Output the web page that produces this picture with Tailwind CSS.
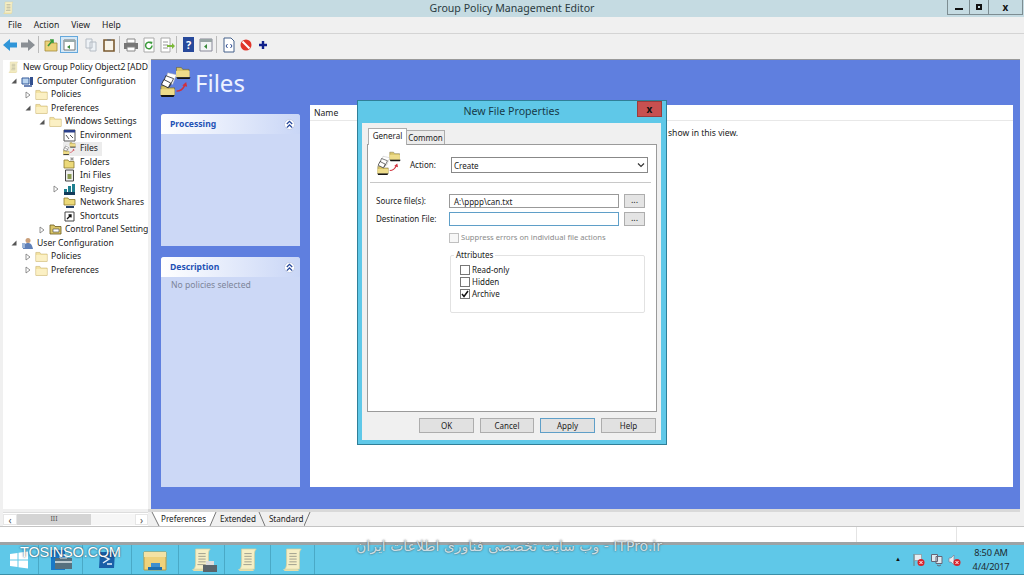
<!doctype html>
<html>
<head>
    <meta charset="UTF-8">
    <script src="https://cdn.jsdelivr.net/npm/@tailwindcss/browser@4"></script>
</head>
<body class="bg-[#f0f0f0]">
<svg class="hidden">
    <defs>
        <symbol id="folder" viewBox="0 0 16 16">
            <path d="M1 3h5l1 2h8v9H1z" fill="#f3e2a0" stroke="#cdb878" stroke-width="0.8"/>
            <path d="M1.500 6h13v7.500h-13z" fill="#fbf0c4"/>
        </symbol>
        <symbol id="files" viewBox="0 0 32 32">
            <path d="M17 1.500h5l1.500 2H30v8H17z" fill="#d8c468" stroke="#5a5020" stroke-width="0.5"/>
            <path d="M16.500 5h14v6.500h-14z" fill="#eedc8a"/>
            <path d="M17 11.500h14.500l-1 2H18z" fill="#161616"/>
            <path d="M1 20.500h5l1.500 2H15v7.500H1z" fill="#d8c468" stroke="#5a5020" stroke-width="0.5"/>
            <path d="M0.500 24h14.500v6H0.500z" fill="#eedc8a"/>
            <path d="M0.500 30h14.500l-1 2H1.500z" fill="#161616"/>
            <path d="M8 7l9 2-4 10-8-3z" fill="#fff" stroke="#aaa" stroke-width="0.5"/>
            <path d="M6 10l8 3-4 8-7-3z" fill="#fff" stroke="#222" stroke-width="0.8"/>
            <path d="M4 14l7 3.500-2.500 5-7-3.500z" fill="#fff" stroke="#111" stroke-width="0.8"/>
            <path d="M17 26q6 0 8.500-6" fill="none" stroke="#d0303c" stroke-width="1.400"/>
            <path d="M23 20l4-3.500 1 5z" fill="#d0303c"/>
        </symbol>
        <symbol id="scroll" viewBox="0 0 24 28">
            <path d="M5 2h16c-2 2-2 4-2 8v14H3c2-2 2-5 2-8z" fill="#f6efc6" stroke="#d9cf9a" stroke-width="0.8"/>
            <path d="M8 7h8M8 10h8M8 13h8M8 16h8M7 19h9" stroke="#9a9a8a" stroke-width="1"/>
            <path d="M1 24h16c1 2 2 2 3 2H3z" fill="#e9dda6"/>
        </symbol>
        <symbol id="tri-open" viewBox="0 0 8 8"><path d="M6.500 1.500v5h-5z" fill="#555"/></symbol>
        <symbol id="tri-closed" viewBox="0 0 8 8"><path d="M2 1l4 3-4 3z" fill="#fff" stroke="#777" stroke-width="0.8"/></symbol>
        <symbol id="collapse" viewBox="0 0 10 10"><path d="M2 4.500l3-3 3 3M2 8.500l3-3 3 3" fill="none" stroke="#26489a" stroke-width="1.400"/></symbol>
    </defs>
</svg>

<div class="relative w-[1024px] h-[575px] overflow-hidden flex flex-col text-[#222] text-[8.6px] font-['Noto_Sans','Open_Sans',sans-serif]">
    <!-- title bar -->
    <div class="relative h-[17px] bg-[#c5dbe2] flex items-center justify-center text-[10.6px] text-[#2a3a40]">
        <svg class="absolute left-[2px] top-[1px] w-[13px] h-[14px]"><use href="#scroll"/></svg>
        <span>Group Policy Management Editor</span>
        <div class="absolute right-[1px] top-0 flex h-[15px] border-b border-[#7d8d92]">
            <div class="w-[22px] border-l border-[#7d8d92] flex items-center justify-center"><div class="w-[8px] h-[2px] mt-[3px] bg-[#111]"></div></div>
            <div class="w-[19px] border-l border-[#7d8d92] flex items-center justify-center"><div class="w-[6px] h-[6px] border-2 border-[#111]"></div></div>
            <div class="w-[35px] border-x border-[#7d8d92] flex items-center justify-center text-[10px] font-bold text-[#111]">x</div>
        </div>
    </div>
    <!-- menu -->
    <div class="h-[16px] flex items-center pl-[8px] gap-[12px]">
        <span>File</span><span>Action</span><span>View</span><span>Help</span>
    </div>
    <div class="h-px bg-[#d4d4d4]"></div>
    <!-- toolbar -->
    <div class="h-[25px] flex items-center pl-[1px] pb-[4px]">
        <svg class="w-[18px] h-[18px]" viewBox="0 0 18 18"><path d="M2 9l7-6v3.500h7v5H9V15z" fill="#2f95d8"/></svg>
        <svg class="w-[18px] h-[18px]" viewBox="0 0 18 18"><path d="M16 9L9 3v3.500H2v5h7V15z" fill="#8a8f94"/></svg>
        <div class="w-px h-[17px] bg-[#bbb] ml-[1px] mr-[3px]"></div>
        <svg class="w-[18px] h-[18px]" viewBox="0 0 18 18"><path d="M3 5h5l1 2h6v8H3z" fill="#ecd27a" stroke="#a38c3e" stroke-width="0.8"/><path d="M6 10l5-6m-3 0h3v3" fill="none" stroke="#3a9a3a" stroke-width="1.600"/></svg>
        <div class="w-[18px] h-[17px] border border-[#64a8dc] bg-[#d5e8f6] flex items-center justify-center">
            <svg class="w-[13px] h-[12px]" viewBox="0 0 13 12"><path d="M1 1h11v10H1z" fill="#fff" stroke="#777"/><path d="M1 1h11v2H1z" fill="#9aa"/><path d="M7 6v4l-3-2z" fill="#3a8a3a"/></svg>
        </div>
        <svg class="w-[18px] h-[18px] ml-[4px]" viewBox="0 0 18 18"><path d="M4 3h6v9H4zM8 6h6v9H8z" fill="#eef2f6" stroke="#b5bcc4"/></svg>
        <svg class="w-[18px] h-[18px]" viewBox="0 0 18 18"><path d="M4 4h10v11H4z" fill="#f8f4ea" stroke="#7a5a30" stroke-width="1.600"/><path d="M7 3h4v2H7z" fill="#777"/></svg>
        <div class="w-px h-[17px] bg-[#bbb] mx-[1px]"></div>
        <svg class="w-[18px] h-[18px] ml-[1px]" viewBox="0 0 18 18"><path d="M5 3h8v4H5z" fill="#fff" stroke="#888"/><path d="M2 7h14v6H2z" fill="#777"/><path d="M5 11h8v4H5z" fill="#fff" stroke="#888"/></svg>
        <svg class="w-[18px] h-[18px]" viewBox="0 0 18 18"><path d="M4 2h10v14H4z" fill="#fff" stroke="#aaa"/><path d="M12 9.500a3.200 3.200 0 1 1-1-2.300" fill="none" stroke="#3a9a3a" stroke-width="1.500"/><path d="M9.500 5.500l3 .2-.6 2.800z" fill="#3a9a3a"/></svg>
        <svg class="w-[18px] h-[18px]" viewBox="0 0 18 18"><path d="M3 2h9v14H3z" fill="#fff" stroke="#aaa"/><path d="M5 6h5M5 9h5M5 12h5" stroke="#999"/><path d="M9 9h5V7l3 3-3 3v-2H9z" fill="#7cb83a"/></svg>
        <div class="w-px h-[17px] bg-[#bbb] mr-[1px]"></div>
        <div class="w-[11px] h-[15px] ml-[5px] mr-[3px] bg-[#27499b] text-white text-[11px] leading-[15px] text-center font-bold">?</div>
        <svg class="w-[18px] h-[18px]" viewBox="0 0 18 18"><path d="M3 3h12v12H3z" fill="#f2f4f4" stroke="#889"/><path d="M3 3h12v3H3z" fill="#99a5a5"/><path d="M10 8v5l-3-2.500z" fill="#3a8a3a"/></svg>
        <div class="w-px h-[17px] bg-[#bbb] mx-[1px]"></div>
        <svg class="w-[18px] h-[18px] ml-[2px]" viewBox="0 0 18 18"><path d="M4 2h7l3 3v11H4z" fill="#fff" stroke="#44608a"/><path d="M7.500 8L6 10l1.500 2M10.500 8L12 10l-1.500 2" fill="none" stroke="#2b4a90"/></svg>
        <svg class="w-[18px] h-[18px] -ml-[1px]" viewBox="0 0 18 18"><circle cx="9" cy="9" r="5.500" fill="#e0352a"/><path d="M5.500 5.500l7 7" stroke="#fff" stroke-width="2"/></svg>
        <svg class="w-[18px] h-[18px] -ml-[1px]" viewBox="0 0 18 18"><path d="M9 5v8M5 9h8" stroke="#10208a" stroke-width="2.400"/></svg>
    </div>
    <!-- main -->
    <div class="h-px bg-[#9a9a9a] ml-[151px] mr-[4px]"></div>
    <div class="flex h-[449px] pl-[3px] pr-[4px]">
        <div class="w-[145px] bg-white flex flex-col pt-[1px]">
            <div class="flex items-center h-[13.5px] pl-[4px]"><svg class="w-[13px] h-[13px] shrink-0"><use href="#scroll"/></svg><span class="ml-[3px] whitespace-nowrap tracking-[-0.1px]">New Group Policy Object2 [ADD</span></div>
            <div class="flex items-center h-[13.5px] pl-[10px]"><svg class="w-[8px] h-[8px] -ml-[3px] mr-[3px]"><use href="#tri-open"/></svg><svg class="w-[13px] h-[13px]" viewBox="0 0 13 13"><path d="M1 3h7v6H1z" fill="#b9d3ee" stroke="#345a9a"/><path d="M3 10h8v2H3z" fill="#6d85b5"/><path d="M9 2h3v8H9z" fill="#33508f"/></svg><span class="ml-[3px]">Computer Configuration</span></div>
            <div class="flex items-center h-[13.5px] pl-[24px]"><svg class="w-[8px] h-[8px] -ml-[3px] mr-[3px]"><use href="#tri-closed"/></svg><svg class="w-[13px] h-[13px]"><use href="#folder"/></svg><span class="ml-[3px]">Policies</span></div>
            <div class="flex items-center h-[13.5px] pl-[24px]"><svg class="w-[8px] h-[8px] -ml-[3px] mr-[3px]"><use href="#tri-open"/></svg><svg class="w-[13px] h-[13px]"><use href="#folder"/></svg><span class="ml-[3px]">Preferences</span></div>
            <div class="flex items-center h-[13.5px] pl-[38px]"><svg class="w-[8px] h-[8px] -ml-[3px] mr-[3px]"><use href="#tri-open"/></svg><svg class="w-[13px] h-[13px]"><use href="#folder"/></svg><span class="ml-[3px]">Windows Settings</span></div>
            <div class="flex items-center h-[13.5px] pl-[60px]"><svg class="w-[13px] h-[13px]" viewBox="0 0 13 13"><path d="M1 1h11v11H1z" fill="#fff" stroke="#555"/><path d="M1 1h11v2.500H1z" fill="#2a3f8a"/><path d="M3 6l3 4M7 6l3 3" stroke="#555"/></svg><span class="ml-[4px]">Environment</span></div>
            <div class="flex items-center h-[13.5px] pl-[60px]"><div class="flex items-center bg-[#ececec] h-[13.5px] pr-[4px]"><svg class="w-[13px] h-[13px]"><use href="#files"/></svg><span class="ml-[4px]">Files</span></div></div>
            <div class="flex items-center h-[13.5px] pl-[60px]"><svg class="w-[13px] h-[13px]" viewBox="0 0 13 13"><path d="M1 4h4l1 1.500h5V12H1z" fill="#ecd979" stroke="#8a7a30" stroke-width="0.8"/><path d="M9 1v4M7 3h4M7.500 1.500l3 3M10.500 1.500l-3 3" stroke="#888" stroke-width="0.7"/></svg><span class="ml-[4px]">Folders</span></div>
            <div class="flex items-center h-[13.5px] pl-[60px]"><svg class="w-[13px] h-[13px]" viewBox="0 0 13 13"><path d="M2.500 1h8v11h-8z" fill="#eee" stroke="#444"/><path d="M4.500 5h4v5h-4z" fill="#8a9a50"/></svg><span class="ml-[4px]">Ini Files</span></div>
            <div class="flex items-center h-[13.5px] pl-[52px]"><svg class="w-[8px] h-[8px] -ml-[3px] mr-[3px]"><use href="#tri-closed"/></svg><svg class="w-[13px] h-[13px]" viewBox="0 0 13 13"><path d="M1 6h3v6H1zM5 3h3v9H5zM9 1h3v11H9z" fill="#1f7f8f"/><path d="M1 9h11v3H1z" fill="#123a5a"/></svg><span class="ml-[4px]">Registry</span></div>
            <div class="flex items-center h-[13.5px] pl-[60px]"><svg class="w-[13px] h-[13px]" viewBox="0 0 13 13"><path d="M1 2h4l1 1.500h6V9H1z" fill="#ecd979" stroke="#8a7a30" stroke-width="0.8"/><path d="M3 10h8v2H3z" fill="#24406a"/></svg><span class="ml-[4px]">Network Shares</span></div>
            <div class="flex items-center h-[13.5px] pl-[60px]"><svg class="w-[13px] h-[13px]" viewBox="0 0 13 13"><path d="M2 2h9v9H2z" fill="#fff" stroke="#444"/><path d="M4 9l4-4M5.500 5H8v2.500" fill="none" stroke="#111" stroke-width="1.300"/></svg><span class="ml-[4px]">Shortcuts</span></div>
            <div class="flex items-center h-[13.5px] pl-[38px]"><svg class="w-[8px] h-[8px] -ml-[3px] mr-[3px] shrink-0"><use href="#tri-closed"/></svg><svg class="w-[13px] h-[13px] shrink-0" viewBox="0 0 13 13"><path d="M1 2h4l1 1.500h6V11H1z" fill="#d9c468" stroke="#6a5a20" stroke-width="0.8"/><path d="M4 6h6v3H4z" fill="#fff" stroke="#444" stroke-width="0.6"/></svg><span class="ml-[3px] whitespace-nowrap tracking-[-0.1px]">Control Panel Setting</span></div>
            <div class="flex items-center h-[13.5px] pl-[10px]"><svg class="w-[8px] h-[8px] -ml-[3px] mr-[3px]"><use href="#tri-open"/></svg><svg class="w-[13px] h-[13px]" viewBox="0 0 13 13"><circle cx="7" cy="3.500" r="2.500" fill="#c99f7a"/><path d="M2 12c0-4 2-6 5-6s4 2 5 6z" fill="#5f80b8"/><path d="M1 6h3v5H1z" fill="#9cb5d8"/></svg><span class="ml-[3px]">User Configuration</span></div>
            <div class="flex items-center h-[13.5px] pl-[24px]"><svg class="w-[8px] h-[8px] -ml-[3px] mr-[3px]"><use href="#tri-closed"/></svg><svg class="w-[13px] h-[13px]"><use href="#folder"/></svg><span class="ml-[3px]">Policies</span></div>
            <div class="flex items-center h-[13.5px] pl-[24px]"><svg class="w-[8px] h-[8px] -ml-[3px] mr-[3px]"><use href="#tri-closed"/></svg><svg class="w-[13px] h-[13px]"><use href="#folder"/></svg><span class="ml-[3px]">Preferences</span></div>
        </div>
        <div class="w-[3px] bg-[#f0f0f0]"></div>
        <div class="flex-1 bg-[#5f7fdf] flex pl-[10px] pr-[7px] pb-[22px]">
            <div class="w-[139px] shrink-0 flex flex-col">
                <div class="h-[54px] flex items-start pt-[6px] -ml-[1px]">
                    <svg class="w-[31px] h-[31px]"><use href="#files"/></svg>
                    <span class="ml-[4px] mt-[1px] text-[24px] leading-[32px] text-[#edf2ff]">Files</span>
                </div>
                <div class="h-[132px] bg-[#ccd8f6] rounded-t-[3px]">
                    <div class="h-[20px] bg-gradient-to-r from-white to-[#c9d6f6] flex items-center justify-between pl-[9px] pr-[5px] pt-[1px] rounded-t-[3px]">
                        <span class="font-bold text-[#1f52b5]">Processing</span>
                        <div class="w-[11px] h-[11px] rounded-full bg-white border border-[#c3cde6] flex items-center justify-center"><svg class="w-[9px] h-[9px]"><use href="#collapse"/></svg></div>
                    </div>
                </div>
                <div class="flex-1 mt-[11px] bg-[#ccd8f6] rounded-t-[3px]">
                    <div class="h-[20px] bg-gradient-to-r from-white to-[#c9d6f6] flex items-center justify-between pl-[9px] pr-[5px] rounded-t-[3px]">
                        <span class="font-bold text-[#1f52b5]">Description</span>
                        <div class="w-[11px] h-[11px] rounded-full bg-white border border-[#c3cde6] flex items-center justify-center"><svg class="w-[9px] h-[9px]"><use href="#collapse"/></svg></div>
                    </div>
                    <div class="pl-[10px] pt-[2px] text-[#7c8599]">No policies selected</div>
                </div>
            </div>
            <div class="flex-1 ml-[10px] mt-[45px] bg-white">
                <div class="h-[16px] border-b border-[#e8e8e8] pl-[4px] leading-[17px]">Name</div>
                <div class="pl-[358px] pt-[5px] leading-[14px]">show in this view.</div>
            </div>
        </div>
    </div>
    <!-- sheet tabs -->
    <div class="h-[3px] bg-[#d9d9d9] ml-[148px] mr-[4px]"></div>
    <div class="h-[14px] flex pl-[3px] pr-[4px]">
        <div class="w-[145px] flex items-center bg-white border-t border-[#ddd] text-[#555]">
            <div class="w-[14px] h-[11px] text-center leading-[10px] text-[10px] border border-[#e6e6e6]">‹</div>
            <div class="w-[74px] h-[11px] bg-[#d4d4d4] text-center leading-[10px] text-[7px]">III</div>
            <div class="flex-1 h-[11px] bg-[#f6f6f6]"></div>
            <div class="w-[13px] h-[11px] text-center leading-[10px] text-[10px] border border-[#e6e6e6]">›</div>
        </div>
        <div class="w-[3px]"></div>
        <div class="flex-1 flex items-stretch text-[8.1px]">
            <svg class="w-[10px] h-[14px]" viewBox="0 0 10 14"><path d="M1 0l7 14h2V0z" fill="#fff"/><path d="M1 0l7 14" stroke="#777" fill="none"/></svg>
            <span class="bg-white leading-[14px]">Preferences</span>
            <svg class="w-[11px] h-[14px]" viewBox="0 0 11 14"><path d="M0 0v14h4l6-14z" fill="#fff"/><path d="M4 14l6-14" stroke="#777" fill="none"/></svg>
            <span class="ml-[3px] leading-[14px]">Extended</span>
            <svg class="w-[9px] h-[14px] ml-[2px]" viewBox="0 0 9 14"><path d="M1 0l6 14" stroke="#777" fill="none"/></svg>
            <span class="ml-[2px] leading-[14px]">Standard</span>
            <svg class="w-[7px] h-[14px] ml-[1px]" viewBox="0 0 7 14"><path d="M0 14L6 0" stroke="#777" fill="none"/></svg>
        </div>
    </div>
    <!-- status bar -->
    <div class="h-px bg-[#c4c4c4]"></div>
    <div class="h-[15px] flex bg-white pl-[3px] pr-[4px]">
        <div class="flex-1"></div>
        <div class="w-[100px] border-l border-[#e4e4e4]"></div>
        <div class="w-[64px] border-l border-[#e4e4e4]"></div>
    </div>
    <div class="h-[3px] bg-[#9da3a5]"></div>
    <!-- taskbar -->
    <div class="h-[30px] bg-[#5fc8e8] border-b border-[#3b8fa8] flex items-stretch text-[#1d2b30]">
        <div class="w-[38px] flex items-center justify-center">
            <svg class="w-[18px] h-[18px]" viewBox="0 0 18 18"><path d="M0 3l7.500-1v6.500H0zM8.500 1.800L18 .5v8H8.500zM0 9.500h7.500V16L0 15zM8.500 9.500H18v8l-9.500-1.300z" fill="#fff"/></svg>
        </div>
        <div class="w-[44px] border-l border-[#4aa9c6] flex items-center justify-center">
            <svg class="w-[24px] h-[24px]" viewBox="0 0 24 24"><path d="M2 2h14v20H2z" fill="#1878c8"/><path d="M6 10h17v11H6z" fill="#56707e"/><path d="M6 14h17" stroke="#dfe8ec" stroke-width="1.500"/><path d="M11 7h7v3h-7z" fill="none" stroke="#dfe8ec"/></svg>
        </div>
        <div class="w-[49px] border-l border-[#4aa9c6] flex items-center justify-center">
            <svg class="w-[20px] h-[20px]" viewBox="0 0 20 20"><path d="M3 2h15l-1 16H2z" fill="#1a5fa8"/><path d="M6 6l6 3-6 4M10 14h5" fill="none" stroke="#e8f2fa" stroke-width="1.500"/></svg>
        </div>
        <div class="w-[47px] border-l border-[#4aa9c6] flex items-center justify-center">
            <svg class="w-[24px] h-[24px]" viewBox="0 0 24 24"><path d="M1 4h22v18H1z" fill="#efd27c" stroke="#b59a48"/><path d="M1 4h22v5H1z" fill="#f4e2a4"/><path d="M8 15h9v4H8z" fill="#3f8fd0"/><path d="M5 19h14v3H5z" fill="#1f6fb0"/></svg>
        </div>
        <div class="w-[46px] border-l border-[#4aa9c6] flex items-center justify-center relative">
            <svg class="w-[22px] h-[26px]"><use href="#scroll"/></svg>
            <svg class="absolute left-[24px] top-[15px] w-[14px] h-[13px]" viewBox="0 0 14 13"><path d="M3 1h8v4H3z" fill="#ddd"/><path d="M0 5h14v7H0z" fill="#5a646a"/></svg>
        </div>
        <div class="w-[46px] border-l border-[#4aa9c6] flex items-center justify-center"><svg class="w-[22px] h-[26px]"><use href="#scroll"/></svg></div>
        <div class="w-[45px] border-x border-[#4aa9c6] flex items-center justify-center"><svg class="w-[22px] h-[26px]"><use href="#scroll"/></svg></div>
        <div class="flex-1"></div>
        <div class="flex items-center pr-[13px]">
            <span class="text-[6px] text-[#111] mr-[11px]">▲</span>
            <svg class="w-[13px] h-[14px] mr-[5px]" viewBox="0 0 13 14"><path d="M2 1v12" stroke="#777"/><path d="M2.500 1.500h7v6h-7z" fill="#e8eef2" stroke="#888" stroke-width="0.6"/><circle cx="9" cy="9.500" r="3.500" fill="#d8242c"/><path d="M7.500 8l3 3M10.500 8l-3 3" stroke="#fff"/></svg>
            <svg class="w-[13px] h-[14px] mr-[5px]" viewBox="0 0 13 14"><path d="M1.500 1.500h6v7h-6zM6 3.500h6v7H6z" fill="#dfeaf0" stroke="#667"/><path d="M7 12l2 1 2-1" stroke="#667" fill="none"/></svg>
            <svg class="w-[13px] h-[14px] mr-[10px]" viewBox="0 0 13 14"><path d="M1 5h2l3-3v10L3 9H1z" fill="#e8eef2" stroke="#778" stroke-width="0.6"/><circle cx="9" cy="9.500" r="3.500" fill="#d8242c"/><path d="M7.500 8l3 3M10.500 8l-3 3" stroke="#fff"/></svg>
            <div class="w-[40px] text-[9.2px] leading-[14px] text-center tracking-[-0.2px]">8:50 AM<br>4/4/2017</div>
        </div>
    </div>

    <!-- dialog -->
    <div class="absolute left-[357px] top-[100px] w-[310px] h-[345px] bg-[#5fc8e8] border border-[#2f7f98] flex flex-col pl-[4px] pr-[5px] pb-[4px] text-[8px]">
        <div class="relative h-[22px] shrink-0 flex items-center justify-center text-[10.6px] text-[#173a48]">
            <span>New File Properties</span>
            <div class="absolute right-[-1px] top-0 w-[25px] h-[16px] bg-[#c75050] border border-[#9a3c3c] flex items-center justify-center text-[10px] leading-none font-bold text-[#111]">x</div>
        </div>
        <div class="flex-1 bg-[#f0f0f0] px-[5px] flex flex-col">
            <div class="h-[21px] shrink-0 flex items-end pl-px">
                <div class="relative z-10 h-[17px] w-[39px] -mb-px bg-white border border-b-0 border-[#adadad] text-center leading-[14px]">General</div>
                <div class="h-[14px] w-[38px] bg-[#ececec] border border-b-0 border-l-0 border-[#adadad] text-center leading-[14px]">Common</div>
            </div>
            <div class="h-[268px] w-[290px] shrink-0 bg-white border border-[#9a9a9a]">
                <div class="flex mt-[6px] h-[24px] pl-[9px]">
                    <svg class="w-[24px] h-[24px]"><use href="#files"/></svg>
                    <span class="ml-[9px] w-[41px] mt-[6px] leading-[16px]">Action:</span>
                    <div class="mt-[6px] w-[197px] h-[16px] border border-[#888] pl-[2px] flex items-center justify-between">
                        <span class="mt-[1px]">Create</span>
                        <svg class="w-[8px] h-[8px] mr-[2px]" viewBox="0 0 8 8"><path d="M1 2.500l3 3 3-3" fill="none" stroke="#333" stroke-width="1.200"/></svg>
                    </div>
                </div>
                <div class="h-px bg-[#c8c8c8] mt-[7px] ml-[2px] w-[281px]"></div>
                <div class="flex mt-[11px] h-[14px] pl-[8px]">
                    <span class="w-[73px] leading-[14px]">Source file(s):</span>
                    <div class="w-[170px] border border-[#999] pl-[4px] leading-[13px]">A:\pppp\can.txt</div>
                    <div class="w-[21px] ml-[5px] bg-[#e4e4e4] border border-[#adadad] text-center leading-[10px] text-[9px]">...</div>
                </div>
                <div class="flex mt-[4px] h-[14px] pl-[8px]">
                    <span class="w-[73px] leading-[14px]">Destination File:</span>
                    <div class="w-[170px] border border-[#5f9fc8]"></div>
                    <div class="w-[21px] ml-[5px] bg-[#e4e4e4] border border-[#adadad] text-center leading-[10px] text-[9px]">...</div>
                </div>
                <div class="flex items-center mt-[7px] h-[10px] pl-[81px] text-[#8a8a8a]">
                    <div class="w-[10px] h-[10px] border border-[#c0c0c0] bg-[#f7f7f7]"></div>
                    <span class="ml-[2px] whitespace-nowrap text-[7.6px]">Suppress errors on individual file actions</span>
                </div>
                <div class="relative mt-[12px] ml-[82px] w-[195px] h-[58px] border border-[#e2e2e2] rounded-[2px] pl-[9px] pt-[9px] flex flex-col gap-[2px]">
                    <span class="absolute left-[3px] -top-[7px] bg-white px-[2px] leading-[11px]">Attributes</span>
                    <div class="flex items-center h-[10px]"><div class="w-[10px] h-[10px] border border-[#777]"></div><span class="ml-[2px]">Read-only</span></div>
                    <div class="flex items-center h-[10px]"><div class="w-[10px] h-[10px] border border-[#777]"></div><span class="ml-[2px]">Hidden</span></div>
                    <div class="flex items-center h-[10px]">
                        <div class="w-[10px] h-[10px] border border-[#777] flex items-center justify-center"><svg class="w-[8px] h-[8px]" viewBox="0 0 8 8"><path d="M1 4l2 2.500L7 1" fill="none" stroke="#111" stroke-width="1.500"/></svg></div>
                        <span class="ml-[2px]">Archive</span>
                    </div>
                </div>
            </div>
            <div class="flex gap-[6px] mt-[6px] pl-[52px]">
                <div class="w-[55px] h-[15px] bg-[#e1e1e1] border border-[#adadad] text-center leading-[13px]">OK</div>
                <div class="w-[54px] h-[15px] bg-[#e1e1e1] border border-[#adadad] text-center leading-[13px]">Cancel</div>
                <div class="w-[55px] h-[15px] bg-[#e1e1e1] border border-[#5f9fc8] text-center leading-[13px]">Apply</div>
                <div class="w-[55px] h-[15px] bg-[#e1e1e1] border border-[#adadad] text-center leading-[13px]">Help</div>
            </div>
        </div>
    </div>

    <!-- video watermarks -->
    <div class="absolute left-[20px] top-[543px] text-[14.5px] leading-[18px] text-white font-['Liberation_Sans',sans-serif] tracking-[-0.2px] [text-shadow:0_0_2px_#123]">TOSINSO.COM</div>
    <div dir="rtl" class="absolute left-[350px] top-[537px] w-[312px] whitespace-nowrap text-[14px] leading-[18px] text-[#dfeaf0]/90 font-['DejaVu_Sans',sans-serif] [text-shadow:0_0_2px_#444]">ITPro.ir - وب سایت تخصصی فناوری اطلاعات ایران</div>
</div>
</body>
</html>
